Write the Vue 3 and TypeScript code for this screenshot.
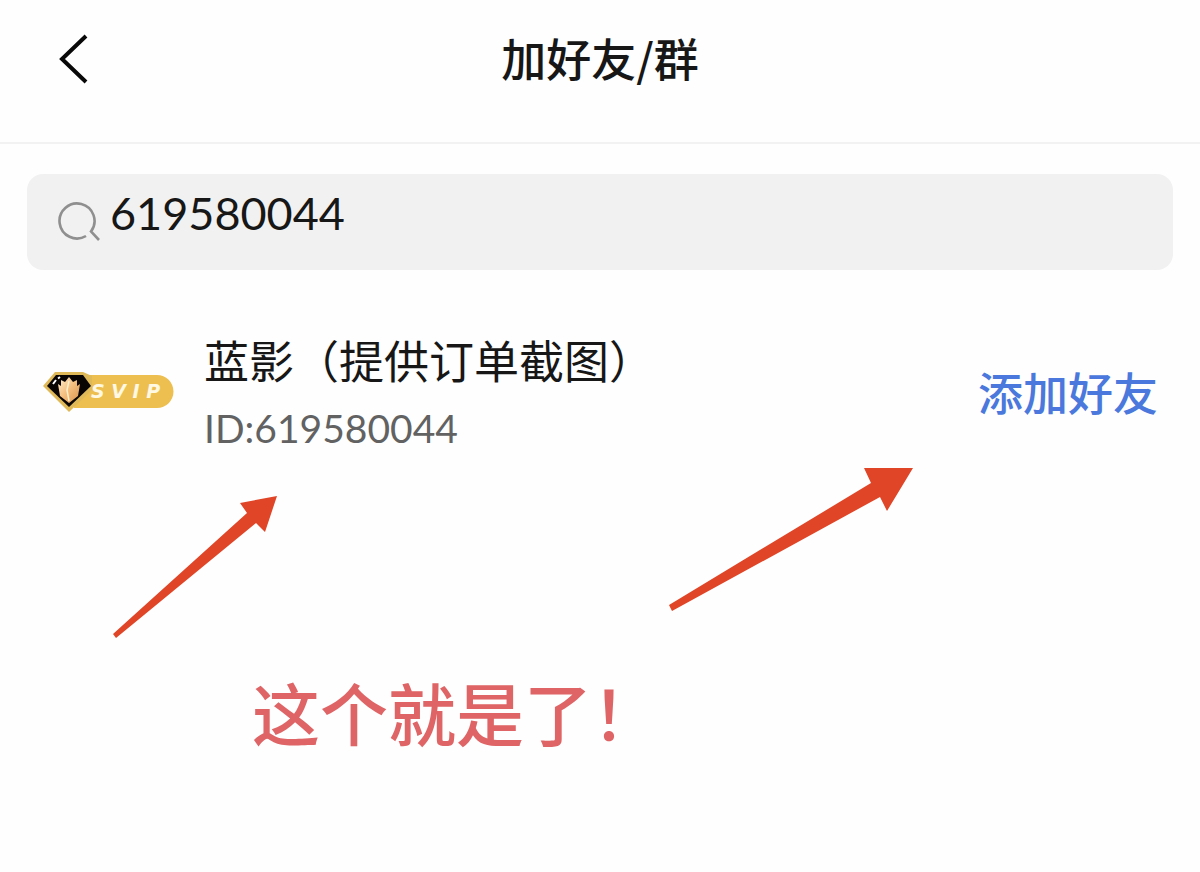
<script setup lang="ts">
import { ref } from 'vue'

interface Contact {
  name: string
  id: string
}

const keyword = ref('619580044')
const contacts: Contact[] = [{ name: '蓝影（提供订单截图）', id: '619580044' }]
</script>

<template>
  <main class="page">
    <header class="header">
      <button class="back" type="button" aria-label="返回">
        <svg width="32" height="52" viewBox="0 0 32 52" aria-hidden="true">
          <path d="M28 4 L4 27 L28 50" fill="none" stroke="#080808" stroke-width="4" />
        </svg>
      </button>
      <h1 class="title">加好友/群</h1>
    </header>

    <label class="search">
      <svg class="search-icon" width="44" height="44" viewBox="0 0 44 44" aria-hidden="true">
        <path d="M28 36 A17.500 17.500 0 1 1 33 31.500 L41 40" fill="none" stroke="#8f8f8f" stroke-width="2.600" />
      </svg>
      <input v-model="keyword" class="search-input" type="text" aria-label="搜索" />
    </label>

    <ul class="results">
      <li v-for="contact in contacts" :key="contact.id" class="result">
        <svg class="badge" width="136" height="44" viewBox="0 0 136 44" role="img" aria-label="SVIP">
          <defs>
            <linearGradient id="flame" x1="0" y1="0" x2="1" y2="1">
              <stop offset="0" stop-color="#fff0d0" />
              <stop offset="0.500" stop-color="#f4bd7c" />
              <stop offset="1" stop-color="#d9934e" />
            </linearGradient>
          </defs>
          <path d="M36 5 H115 A16.500 16.500 0 0 1 115 38 H32 Z" fill="#edbf50" />
          <path d="M13 2 H41 L50 6 L50 20 L27 42 L1 16 Z" fill="#dfb858" />
          <path d="M14 5 H41 L49 16 L27 37 L5 16 Z" fill="#080503" />
          <path d="M11 14 L14 10 M16 8.500 L18 7" stroke="#fff" stroke-width="2" fill="none" />
          <path d="M27 33 L18 26 L16 14 L19 16 L19 10 L23 12 L27 7 L31 12 L35 10 L35 16 L38 14 L36 26 Z" fill="url(#flame)" />
          <path d="M27 11 L25 20 L27 31" stroke="#fff0ce" stroke-width="1.500" fill="none" />
          <text class="badge-text" x="49" y="28">S V I P</text>
        </svg>
        <div class="info">
          <span class="name">{{ contact.name }}</span>
          <span class="id">ID:{{ contact.id }}</span>
        </div>
        <button class="add" type="button">添加好友</button>
      </li>
    </ul>

    <section class="note">
      <svg class="arrows" viewBox="0 0 1200 190" aria-hidden="true">
        <path d="M113 174 L247 53 L240 43 L277 36 L265 72 L256 63 L116 178 Z" />
        <path d="M669 145 L871 23 L864 8 L913 8 L887 51 L880 37 L672 151 Z" />
      </svg>
      <p class="note-text">这个就是了！</p>
    </section>
  </main>
</template>

<style>
body {
  margin: 0;
  background: #fefefe;
}
</style>

<style scoped>
.page {
  font-family: Lato, "Noto Sans CJK SC", sans-serif;
  color: #171717;
}

.header {
  display: grid;
  grid-template-columns: 1fr auto 1fr;
  align-items: center;
  padding: 22px 58px 48px;
  border-bottom: 2px solid #f2f2f2;
}

.back {
  display: flex;
  justify-self: start;
  padding: 0;
  border: 0;
  background: none;
}

.title {
  margin: 0;
  font-size: 45px;
  line-height: 72px;
  font-weight: 500;
  font-family: "Noto Sans CJK SC", sans-serif;
}

.search {
  display: flex;
  align-items: center;
  gap: 8px;
  margin: 30px 27px 0;
  padding: 0 31px;
  border-radius: 16px;
  background: #f1f1f1;
}

.search-icon {
  flex: none;
}

.search-input {
  flex: 1;
  min-width: 0;
  padding: 0 0 18px;
  border: 0;
  outline: 0;
  background: none;
  color: inherit;
  font-family: inherit;
  font-size: 45px;
  line-height: 78px;
  height: 78px;
}

.results {
  margin: 0;
  padding: 58px 42px 0;
  list-style: none;
}

.result {
  display: flex;
  align-items: center;
}

.badge {
  flex: none;
}

.badge-text {
  fill: #fff8e2;
  font: italic bold 19px "DejaVu Sans", sans-serif;
}

.info {
  display: flex;
  flex: 1;
  flex-direction: column;
  gap: 8px;
  padding-left: 26px;
}

.name {
  font-family: "Noto Sans CJK SC", sans-serif;
  font-size: 45px;
  line-height: 64px;
}

.id {
  color: #626262;
  font-size: 39px;
  line-height: 56px;
}

.add {
  padding: 0;
  border: 0;
  background: none;
  color: #4a78dc;
  font-family: "Noto Sans CJK SC", sans-serif;
  font-size: 45px;
  font-weight: 500;
  line-height: 64px;
}

.note {
  padding-top: 4px;
}

.arrows {
  display: block;
  width: 100%;
  fill: #df4526;
}

.note-text {
  margin: 14px 0 0;
  padding-left: 252px;
  color: #df6466;
  font-family: "Noto Sans CJK SC", sans-serif;
  font-size: 68px;
  font-weight: 500;
  line-height: 96px;
}
</style>
